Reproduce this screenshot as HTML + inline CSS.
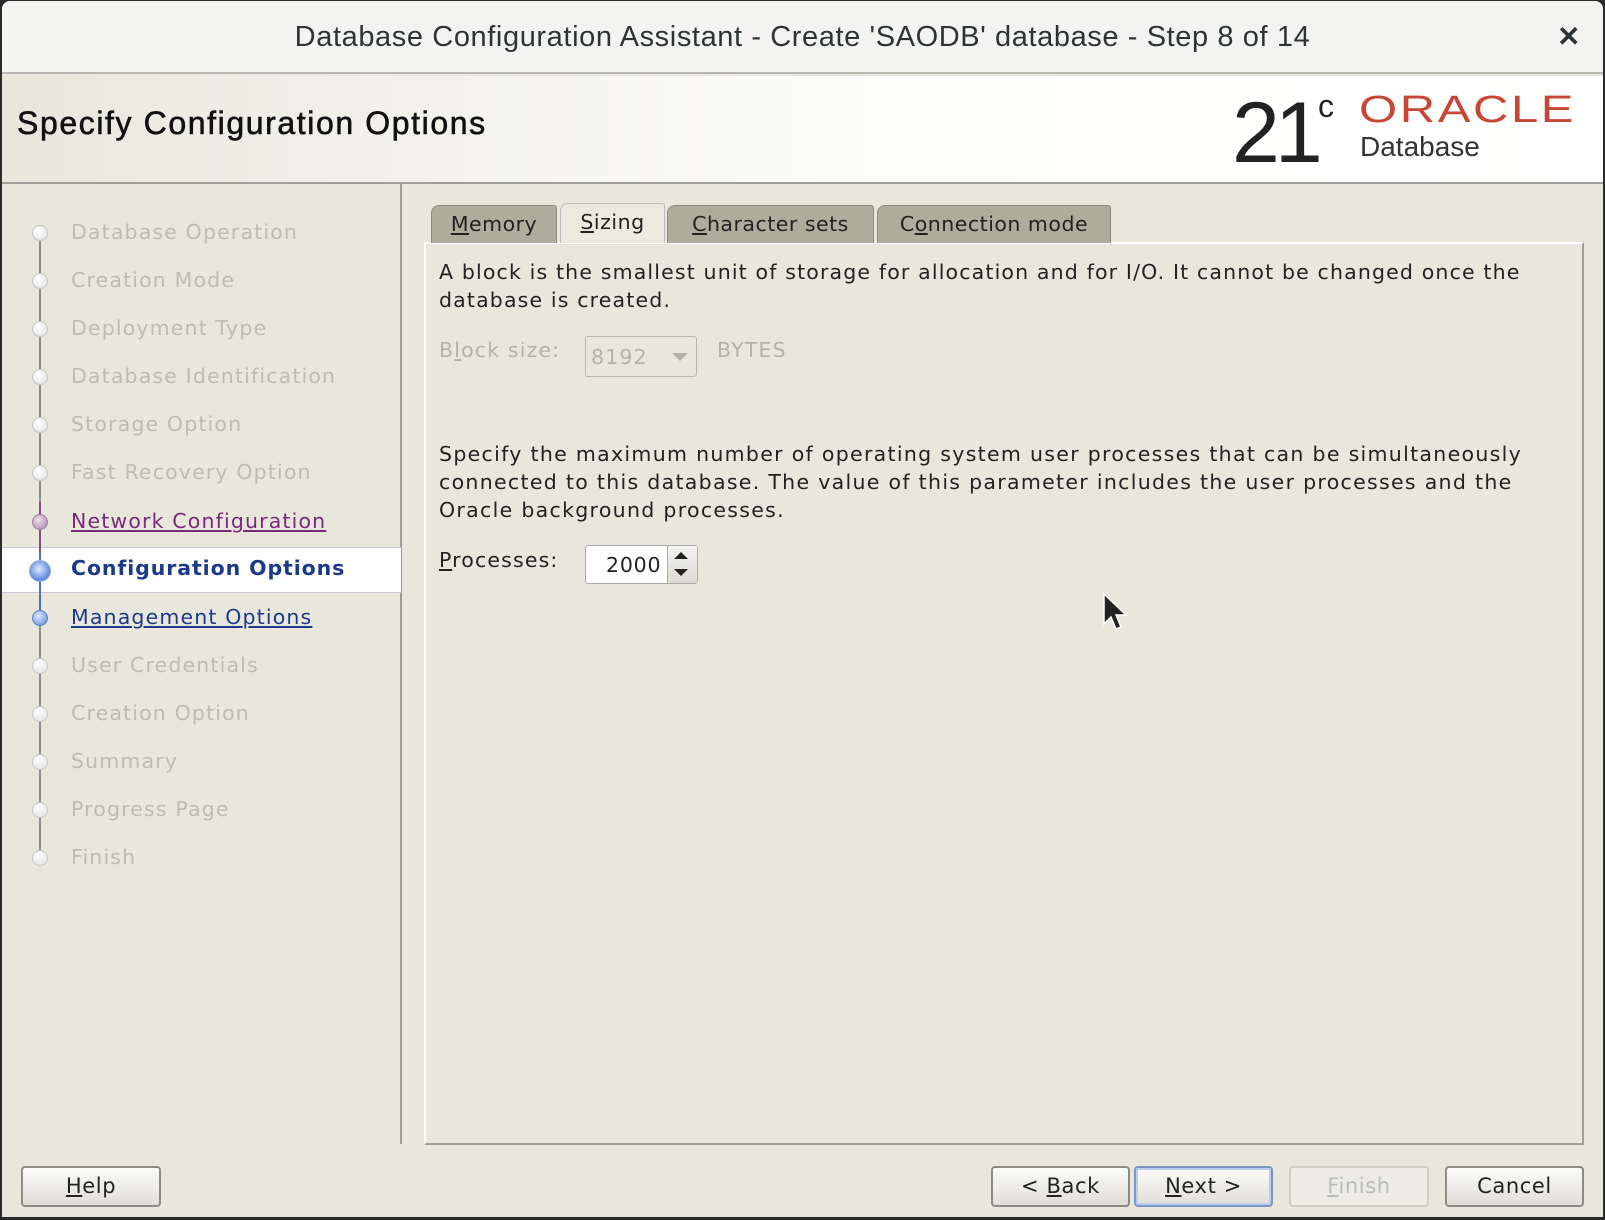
<!DOCTYPE html>
<html><head><meta charset="utf-8"><style>
*{margin:0;padding:0;box-sizing:border-box}
body{width:1605px;height:1220px;background:#2b2b2b;position:relative;overflow:hidden;font-family:"DejaVu Sans","Liberation Sans",sans-serif}
.win{position:absolute;left:2px;top:1px;width:1601px;height:1216px;background:#e9e7dc;border-radius:8px 8px 0 0;overflow:hidden}
.title{position:absolute;left:0;top:0;width:100%;height:73px;background:#f3f3f2;border-bottom:2px solid #b8b8b4;font-family:"Liberation Sans",sans-serif;font-size:29px;color:#2e3436;text-align:center;line-height:72px;letter-spacing:0.6px}
.title .x{position:absolute;right:22px;top:0;font-size:28px;font-weight:bold}
.hdr{position:absolute;left:0;top:75px;width:100%;height:108px;background:linear-gradient(90deg,#e9e7dc 0%,#fdfdfb 55%,#fff 100%);border-bottom:2px solid #9f9e98}
.hdr h1{position:absolute;left:15px;top:29px;font-family:"Liberation Sans",sans-serif;font-weight:normal;font-size:32px;color:#111;letter-spacing:1.6px;-webkit-text-stroke:0.6px #111}
.t21{position:absolute;left:1230px;top:8px;font-family:"Liberation Sans",sans-serif;font-size:86px;color:#222;letter-spacing:-5px}
.tc{position:absolute;left:1316px;top:12px;font-family:"Liberation Sans",sans-serif;font-size:32px;color:#222}
.orc{position:absolute;left:1357px;top:13px;font-family:"Liberation Sans",sans-serif;font-size:38px;color:#c74634;letter-spacing:2px;transform:scaleX(1.29);transform-origin:left}
.dbt{position:absolute;left:1358px;top:55px;font-family:"Liberation Sans",sans-serif;font-size:28px;color:#333}
.left{position:absolute;left:0;top:183px;width:400px;height:960px;border-right:2px solid #9f9e98}
.line{position:absolute;left:37px;width:2px;background:#8c8c8c}
.item{position:absolute;left:69px;font-size:20.5px;color:#bdbbb3;letter-spacing:1.15px;white-space:nowrap}
.dot{position:absolute;left:30px;width:16px;height:16px;border-radius:50%;background:radial-gradient(circle at 40% 35%,#fff,#dedede);border:1px solid #c6c6c6}
.sel{position:absolute;left:0;top:363px;width:399px;height:46px;background:#fff;border-top:1px solid #c7cbd6;border-bottom:1px solid #c7cbd6}
.panel{position:absolute;left:422px;top:241px;width:1160px;height:903px;border:2px solid #9f9e98;border-top:2px solid #fff;border-left:2px solid #fff}
.tab{position:absolute;top:204px;height:38px;background:#aeac9c;border:1px solid #8d8b7e;border-bottom:none;border-radius:8px 3px 0 0;font-size:20.5px;color:#222;text-align:center;line-height:36px;letter-spacing:0.5px}
.tab.on{background:#eceadf;height:40px;top:202px;border-color:#bbb}
.txt{position:absolute;left:437px;font-size:20.5px;color:#222;letter-spacing:1.15px;line-height:28px;white-space:nowrap}
.dis{color:#b4b2aa}
.box{position:absolute;border:1px solid #b8b6ac;border-radius:3px}
.btn{position:absolute;top:1165px;height:41px;border:2px solid #8d8b84;border-radius:4px;background:linear-gradient(#fbfbf9,#e0ded6);font-size:21px;color:#222;text-align:center;line-height:37px;font-family:"DejaVu Sans",sans-serif;letter-spacing:0.6px}
u{text-decoration:underline}
</style></head><body>
<div class="win">
<div class="title">Database Configuration Assistant - Create 'SAODB' database - Step 8 of 14<span class="x">✕</span></div>
<div class="hdr"><h1>Specify Configuration Options</h1>
<div class="t21">21</div><div class="tc">c</div><div class="orc">ORACLE</div><div class="dbt">Database</div></div>
<div class="left">
<div class="sel"></div>
<div class="line" style="top:48px;height:628px"></div>
<div class="line" style="top:318px;height:50px;background:#8a4a8a"></div>
<div class="line" style="top:368px;height:70px;background:#4a6fc4"></div>
</div>
<div style="position:absolute;left:0;top:0">
<div class="dot" style="top:224px"></div><div class="item" style="top:219px">Database Operation</div>
<div class="dot" style="top:272px"></div><div class="item" style="top:267px">Creation Mode</div>
<div class="dot" style="top:320px"></div><div class="item" style="top:315px">Deployment Type</div>
<div class="dot" style="top:368px"></div><div class="item" style="top:363px">Database Identification</div>
<div class="dot" style="top:416px"></div><div class="item" style="top:411px">Storage Option</div>
<div class="dot" style="top:464px"></div><div class="item" style="top:459px">Fast Recovery Option</div>
<div class="dot" style="top:513px;background:radial-gradient(circle at 40% 35%,#eee0ee,#a87fa8);border-color:#a07aa0"></div><div class="item" style="top:508px;color:#7a2a7a"><u>Network Configuration</u></div>
<div class="dot" style="top:559px;left:27px;width:22px;height:22px;background:radial-gradient(circle at 45% 40%,#dfeaff,#5a86d6 70%,#cfe0f7);border-color:#8fb0e0"></div><div class="item" style="top:555px;color:#1d3a8a;font-weight:bold;letter-spacing:0.9px">Configuration Options</div>
<div class="dot" style="top:609px;background:radial-gradient(circle at 40% 35%,#dce8ff,#5a86d6);border-color:#5a7fc8"></div><div class="item" style="top:604px;color:#1d3a8a"><u>Management Options</u></div>
<div class="dot" style="top:657px"></div><div class="item" style="top:652px">User Credentials</div>
<div class="dot" style="top:705px"></div><div class="item" style="top:700px">Creation Option</div>
<div class="dot" style="top:753px"></div><div class="item" style="top:748px">Summary</div>
<div class="dot" style="top:801px"></div><div class="item" style="top:796px">Progress Page</div>
<div class="dot" style="top:849px"></div><div class="item" style="top:844px">Finish</div>
</div>
<div class="panel"></div>
<div class="tab" style="left:429px;width:126px"><u>M</u>emory</div>
<div class="tab on" style="left:558px;width:105px"><u>S</u>izing</div>
<div class="tab" style="left:665px;width:207px"><u>C</u>haracter sets</div>
<div class="tab" style="left:875px;width:234px">C<u>o</u>nnection mode</div>
<div class="txt" style="top:257px">A block is the smallest unit of storage for allocation and for I/O. It cannot be changed once the<br>database is created.</div>
<div class="txt dis" style="top:335px">B<u>l</u>ock size:</div>
<div class="box" style="left:583px;top:335px;width:112px;height:41px"></div>
<div class="txt dis" style="left:589px;top:342px">8192</div>
<div style="position:absolute;left:670px;top:352px;border-left:8px solid transparent;border-right:8px solid transparent;border-top:8px solid #b4b2aa"></div>
<div class="txt dis" style="left:715px;top:335px">BYTES</div>
<div class="txt" style="top:439px;letter-spacing:1.3px">Specify the maximum number of operating system user processes that can be simultaneously<br>connected to this database. The value of this parameter includes the user processes and the<br>Oracle background processes.</div>
<div class="txt" style="top:545px"><u>P</u>rocesses:</div>
<div class="box" style="left:583px;top:544px;width:113px;height:39px;border-color:#aaa;background:#fff"></div>
<div style="position:absolute;left:665px;top:545px;width:30px;height:37px;background:linear-gradient(#f4f4f0,#dcdad2);border-left:1px solid #aaa"></div>
<div style="position:absolute;left:672px;top:551px;border-left:7px solid transparent;border-right:7px solid transparent;border-bottom:7px solid #222"></div>
<div style="position:absolute;left:672px;top:568px;border-left:7px solid transparent;border-right:7px solid transparent;border-top:7px solid #222"></div>
<div class="txt" style="left:604px;top:550px;letter-spacing:0.8px">2000</div>
<div class="btn" style="left:19px;width:140px"><u>H</u>elp</div>
<div class="btn" style="left:989px;width:139px">&lt; <u>B</u>ack</div>
<div class="btn" style="left:1132px;width:139px;border-color:#7b96c8;box-shadow:inset 0 0 0 2px #b9cbef"><u>N</u>ext &gt;</div>
<div class="btn" style="left:1287px;width:140px;border-color:#cfcdc4;background:#ecebe4;color:#bbb"><u>F</u>inish</div>
<div class="btn" style="left:1443px;width:139px">Cancel</div>
</div>
<svg style="position:absolute;left:1102px;top:592px" width="28" height="44" viewBox="0 0 28 44"><path d="M2 2 L2 32 L9 25 L14 37 L19 35 L14 23 L24 23 Z" fill="#222" stroke="#fff" stroke-width="1.5"/></svg>
</body></html>
